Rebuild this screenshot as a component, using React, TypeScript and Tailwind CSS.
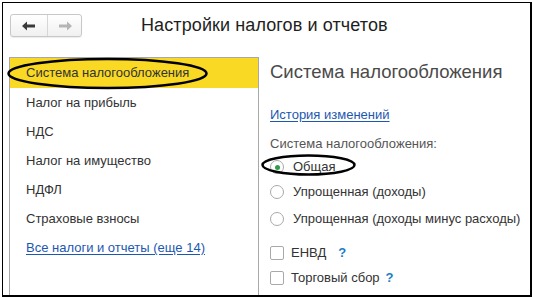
import React from "react";

const Radio = ({ checked }: { checked?: boolean }) => (
  <span className="w-[14px] h-[14px] rounded-full border border-[#a9a9a9] bg-white flex items-center justify-center shrink-0">
    {checked && <span className="w-[5px] h-[5px] rounded-full bg-[#2f9c4c]" />}
  </span>
);

const Check = () => (
  <span className="w-[14px] h-[14px] rounded-[2px] border border-[#a9a9a9] bg-white shrink-0" />
);

export default function App() {
  const items = ["Налог на прибыль", "НДС", "Налог на имущество", "НДФЛ", "Страховые взносы"];
  return (
    <div className="relative w-[533px] h-[298px] bg-white overflow-hidden font-['Liberation_Sans',Arial,sans-serif] text-[13px] text-[#333]">
      <div className="ml-[2px] mt-[2px] w-[530px] h-[295px] border-t border-l border-r-2 border-b-2 border-black flex flex-col overflow-hidden">
        {/* header */}
        <div className="flex items-center h-[44px]">
          <div className="ml-[7px] mt-[1px] flex w-[72px] h-[23px] rounded-[3px] border border-[#c8c8c8] bg-gradient-to-b from-white to-[#f0f0f0] shadow-[0_1px_1px_rgba(0,0,0,0.08)]">
            <div className="w-[37px] flex items-center justify-center border-r border-[#d6d6d6]">
              <svg width="14" height="10" viewBox="0 0 14 10">
                <path d="M0 5 L5 0.5 V3.5 H13 V6.5 H5 V9.5 Z" fill="#3a3a3a" />
              </svg>
            </div>
            <div className="flex-1 flex items-center justify-center">
              <svg width="14" height="10" viewBox="0 0 14 10">
                <path d="M14 5 L9 0.5 V3.5 H1 V6.5 H9 V9.5 Z" fill="#b5b5b5" />
              </svg>
            </div>
          </div>
          <div className="ml-[59px] mt-[1px] text-[18px] text-[#1e1e1e] tracking-[0.1px]">Настройки налогов и отчетов</div>
        </div>
        {/* body */}
        <div className="flex flex-1 mt-[10px]">
          <div className="ml-[6px] w-[250px] border-l border-r border-t border-[#a8a8a8] flex flex-col relative">
            <div className="h-[30px] bg-[#f9d924] flex items-center pl-[16px]">Система налогообложения</div>
            {items.map((t) => (
              <div key={t} className="h-[29px] flex items-center pl-[16px]">{t}</div>
            ))}
            <div className="h-[29px] flex items-center pl-[16px]">
              <span className="text-[#1c58b0] underline underline-offset-2">Все налоги и отчеты (еще 14)</span>
            </div>
          </div>
          <div className="pl-[11px] flex flex-col">
            <div className="h-[30px] flex items-center text-[18.5px] text-[#4a4a4a]">Система налогообложения</div>
            <div className="h-[38px] flex items-end pb-[1px]">
              <span className="text-[#1c58b0] underline underline-offset-2">История изменений</span>
            </div>
            <div className="h-[28px] flex items-end text-[#555]">Система налогообложения:</div>
            <div className="flex flex-col">
              <div className="h-[26px] pt-[2px] flex items-center gap-[9px]"><Radio checked /><span>Общая</span></div>
              <div className="h-[26px] flex items-center gap-[9px]"><Radio /><span>Упрощенная (доходы)</span></div>
              <div className="h-[27px] flex items-center gap-[9px]"><Radio /><span>Упрощенная (доходы минус расходы)</span></div>
              <div className="h-[8px]" />
              <div className="h-[25px] flex items-center gap-[7px]"><Check /><span>ЕНВД</span><span className="ml-[5px] text-[#1a7dc4] font-bold text-[13px]">?</span></div>
              <div className="h-[25px] flex items-center gap-[7px]"><Check /><span>Торговый сбор</span><span className="ml-[-1px] text-[#1a7dc4] font-bold text-[13px]">?</span></div>
            </div>
          </div>
        </div>
      </div>
      {/* hand-drawn ellipses */}
      <svg className="absolute left-0 top-0 pointer-events-none" width="533" height="298">
        <ellipse cx="107.5" cy="73.5" rx="99" ry="14.5" fill="none" stroke="#000" strokeWidth="2.5" />
        <ellipse cx="308.5" cy="165" rx="46" ry="9.5" fill="none" stroke="#000" strokeWidth="2.5" />
      </svg>
    </div>
  );
}
